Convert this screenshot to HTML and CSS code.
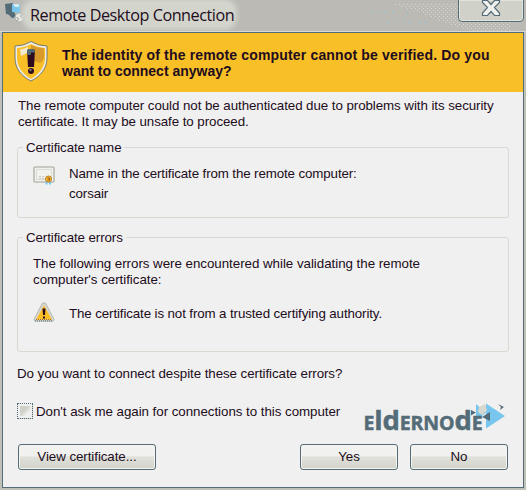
FILE: index.html
```
<!DOCTYPE html>
<html lang="en">
<head>
<meta charset="utf-8">
<title>Remote Desktop Connection</title>
<link rel="stylesheet" href="styles.css">
</head>
<body>
<div class="window">
  <header class="titlebar">
    <svg class="app-icon" width="22" height="24" viewBox="0 0 22 24">
      <path d="M1 4 9 3 9 15 2 14Z" fill="#536c78"/>
      <path d="M8 4 16 4 16 13 8 12Z" fill="#78c6ee"/>
      <path d="M9 4h6v3h-4z" fill="#d7eaf0"/>
      <path d="M3 13 10 12 13 17 8 18Z" fill="#536c78"/>
      <circle cx="15.500" cy="17.500" r="4.500" fill="#e8e9e3" stroke="#a9aba6"/>
      <path d="m12.500 17 2 2-2 2m6-7-2 2 2 2" fill="none" stroke="#8a9294"/>
    </svg>
    <h1 class="title">Remote Desktop Connection</h1>
    <svg class="noise" width="160" height="31" viewBox="0 0 160 31">
      <defs><pattern id="dots" width="4" height="4" patternUnits="userSpaceOnUse"><path d="M0 0h1v1H0zM2 2h1v1H2z" fill="#d8dad0"/></pattern></defs>
      <path d="M20 4h120v27H100L70 22 48 12Z" fill="url(#dots)"/>
      <path d="M1 12.500h1m5 0h1m6 0h1m6 0h1m14 1h1M17 22.500h1m8-1h1m6 0h1m4 1h1m10 0h1m4 0h1" stroke="#78c6ee"/>
    </svg>
    <button class="close" aria-label="Close">
      <svg width="20" height="18" viewBox="0 0 20 18"><path d="M1.500 1.500h5l3.500 4 3.500-4h5v2L13.500 8.500l5 5.500v2.500h-5L10 12.500l-3.500 4h-5V14l5-5.500-5-5z" fill="#f0f0ee" stroke="#536c78" stroke-width="1.200"/></svg>
    </button>
  </header>
  <main class="panel">
    <section class="banner">
      <svg class="shield" width="36" height="42" viewBox="0 0 36 42">
        <path d="M18 1.500Q25 6 34 6V18C34 28 28 36 18 41 8 36 2 28 2 18V6q9 0 16-4.500Z" fill="#eeeee8" stroke="#777970"/>
        <path d="M18 4Q24 7.500 32 8V18c0 8-5 16-14 21C9 34 4 26 4 18V8Q12 7.500 18 4Z" fill="#f9bf27"/>
        <path d="M18 5q6 3 13 3.500V18q-1 3-4 5l-9-3Z" fill="#d99a2c"/>
        <path d="M7 9.500q6-1 8-3v6L8 16Z" fill="#f4ead0"/>
        <path d="M14 10q4-2 8 0l-1 17h-6Z" fill="#2c0b21"/><path d="M14 10q4-2 8 0l-.5 3-3-1-1 3h-3z" fill="#536c78"/>
        <circle cx="18" cy="31" r="3" fill="#2c0b21"/><circle cx="17.500" cy="30" r="1.200" fill="#777"/>
      </svg>
      <h2 class="question"><span class="question-first">The identity of the remote computer cannot be verified. Do you</span><br><span class="question-second">want to connect anyway?</span></h2>
    </section>
    <section class="content">
      <p class="intro">The remote computer could not be authenticated due to problems with its security<br>certificate. It may be unsafe to proceed.</p>
      <section class="group name-group">
        <h3 class="legend">Certificate name</h3>
        <div class="row">
          <svg class="row-icon" width="22" height="20" viewBox="0 0 22 20">
            <rect x="1" y="1" width="20" height="15" rx="1" fill="#f1f1ed" stroke="#b8bab2" stroke-width="1.600"/>
            <path d="M3.500 3.500h15v10h-15z" fill="none" stroke="#d9dbd1"/><path d="M6 10.500h5m-5 2h6" stroke="#c9cbc3" stroke-dasharray="2 1"/>
            <path d="M12.500 15.500h2V18.500h-2zm3.500 0h2V18.500h-2z" fill="#78c6ee"/><circle cx="15.500" cy="13" r="3" fill="#f9bf27" stroke="#bd7923"/><path d="M14.500 12h2v2h-2" fill="none" stroke="#96541c"/>
          </svg>
          <div class="cert"><p>Name in the certificate from the remote computer:</p><p>corsair</p></div>
        </div>
      </section>
      <section class="group error-group">
        <h3 class="legend">Certificate errors</h3>
        <p class="lead">The following errors were encountered while validating the remote<br>computer's certificate:</p>
        <div class="row">
          <svg class="row-icon" width="22" height="20" viewBox="0 0 22 20">
            <path d="M9.500 1h3L21 17.500 20 19H2L1 17.500Z" fill="#d7d8d0" stroke="#b6b8b0"/>
            <path d="M11 3.500 19 17.500H3Z" fill="#f9bf27"/><path d="M3 17.500h16" stroke="#a86c25" stroke-dasharray="1 1"/><path d="M2 19h18" stroke="#536c78" stroke-dasharray="1 1"/>
            <path d="M9.500 6.500h3L12 13h-2Z" fill="#2c0b21"/><path d="M10 14.500h2v2h-2z" fill="#2c0b21"/>
          </svg>
          <p>The certificate is not from a trusted certifying authority.</p>
        </div>
      </section>
      <p class="confirm">Do you want to connect despite these certificate errors?</p>
      <div class="option-row">
        <label class="option"><span class="checkbox"></span><span>Don't ask me again for connections to this computer</span></label>
        <svg class="brand" width="144" height="32" viewBox="364 400 144 32">
          <path d="M476 404v17l10-8.500ZM486 403.500v25L505 416Z" fill="#78c6ee"/>
          <path d="m479 407 6-3 2 6-5 5-4-3z" fill="#d7d9cf"/>
          <g fill="#536c78"><path d="m471 410 5 2.500-5 3zM490 412v9l-8-4zM498 404l6 3-4 3 1-3z"/></g>
          <text class="brand-text" x="363.500" y="430" textLength="119" lengthAdjust="spacing">E<tspan class="tall">ld</tspan>ERNO<tspan class="tall">d</tspan>E</text>
        </svg>
      </div>
      <div class="actions"><button class="btn view">View certificate...</button><button class="btn yes">Yes</button><button class="btn no">No</button></div>
    </section>
  </main>
</div>
</body>
</html>
```
FILE: styles.css
```
* { box-sizing: border-box; }
body { margin: 0; width: 526px; height: 490px; overflow: hidden; font: 13.33px/16px "Liberation Sans", Arial, sans-serif; color: #220c20; }
h1, h2, h3, p { margin: 0; }
button { font: inherit; color: inherit; letter-spacing: inherit; }
.window { width: 526px; height: 490px; background: #bfc0b8; padding: 0 2px 2px; display: flex; flex-direction: column; }
.titlebar { height: 32px; flex: none; display: flex; align-items: flex-start; margin: 0 -2px; border-bottom: 1px solid #d8dad0; background: #bbbab5; overflow: hidden; }
.app-icon { margin: 0 0 0 4px; flex: none; }
.title { margin: 2px 0 0 -1px; padding: 0 0 0 5px; width: 209px; height: 25px; border-radius: 10px; background: #d3d5cc; box-shadow: 0 0 5px 3px #d3d5cc; font: 16.2px/26px "Open Sans", "Noto Sans", sans-serif; letter-spacing: -0.46px; white-space: nowrap; flex: none; }
.noise { margin-left: 137px; flex: none; }
.close { margin: -1px 2px 0 -73px; width: 66px; height: 23px; flex: none; padding: 0; display: flex; justify-content: center; border: 1px solid #536c78; border-radius: 0 0 4px 4px; background: #d0d2c9; box-shadow: inset 0 0 0 1px #e2e3db; }
.close svg { margin-top: -1px; }
.panel { flex: 1; border: 1px solid #536c78; background: #f0f0f0; }
.banner { height: 59px; display: flex; background: #f9bf27; }
.shield { margin: 7px 0 0 10px; flex: none; }
.question { margin: 14px 0 0 13px; font-size: 14px; line-height: 16px; white-space: nowrap; }
.question-first { letter-spacing: 0.16px; }
.question-second { letter-spacing: 0; }
.content { padding: 6px 14px 0; white-space: nowrap; display: flex; flex-direction: column; letter-spacing: -0.065px; }
.intro { height: 49px; padding-left: 1px; }
.group { border: 1px solid #d8dad2; border-radius: 3px; width: 492px; }
.name-group { height: 71px; margin-bottom: 19px; }
.error-group { height: 115px; }
.legend { display: table; font-size: inherit; font-weight: 400; background: #f0f0f0; padding: 0 3px; margin: -8px 0 0 5px; line-height: 16px; letter-spacing: -0.1px; }
.row { display: flex; padding-left: 15px; gap: 14px; letter-spacing: -0.115px; }
.row-icon { flex: none; }
.name-group .row { margin-top: 10px; }
.cert { display: grid; gap: 4px; }
.lead { margin: 10px 0 0 15px; letter-spacing: -0.03px; }
.error-group .row { margin-top: 14px; }
.error-group .row p { margin: 4px 0 -1px; }
.confirm { margin: 14px 0 0; }
.option-row { display: flex; height: 32px; margin-top: 18px; }
.option { display: flex; width: 347px; gap: 3px; padding-top: 4px; letter-spacing: -0.04px; }
.checkbox { width: 16px; height: 16px; margin-top: -1px; flex: none; border: 1px dotted #536c78; background: linear-gradient(135deg, #cfd1c8 45%, #f0f0f0 70%); box-shadow: inset 0 0 0 2px #f0f0f0; }
.brand { flex: none; overflow: visible; }
.brand-text { font: 700 19.5px "Open Sans", "Noto Sans", sans-serif; fill: #536c78; stroke: #536c78; stroke-width: 0.5px; }
.tall { font-size: 27.5px; }
.actions { display: flex; margin-top: 12px; padding-left: 1px; }
.btn { height: 26px; border: 1px solid #536c78; border-radius: 3px; padding: 0; background: linear-gradient(#f1f1ef 45%, #dfe1da 50%, #d2d4cb); box-shadow: inset 0 0 0 1px #f4f4f1; }
.view { width: 138px; }
.yes { width: 98px; margin-left: 144px; }
.no { width: 98px; margin-left: 12px; }
```
